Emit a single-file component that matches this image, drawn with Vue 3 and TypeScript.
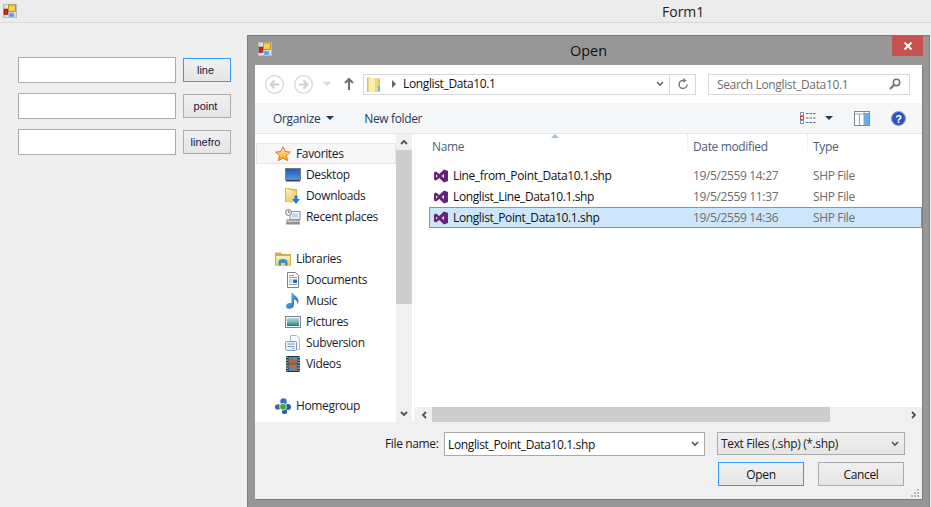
<script setup lang="ts">
interface NavItem { label: string; icon: string; head?: boolean; hot?: boolean }
const nav: (NavItem | null)[] = [
  { label: 'Favorites', icon: 'star', head: true, hot: true },
  { label: 'Desktop', icon: 'desktop' },
  { label: 'Downloads', icon: 'downloads' },
  { label: 'Recent places', icon: 'recent' },
  null,
  { label: 'Libraries', icon: 'libraries', head: true },
  { label: 'Documents', icon: 'documents' },
  { label: 'Music', icon: 'music' },
  { label: 'Pictures', icon: 'pictures' },
  { label: 'Subversion', icon: 'subversion' },
  { label: 'Videos', icon: 'videos' },
  null,
  { label: 'Homegroup', icon: 'homegroup', head: true },
]
const files = [
  { name: 'Line_from_Point_Data10.1.shp', date: '19/5/2559 14:27', selected: false },
  { name: 'Longlist_Line_Data10.1.shp', date: '19/5/2559 11:37', selected: false },
  { name: 'Longlist_Point_Data10.1.shp', date: '19/5/2559 14:36', selected: true },
]
const actions = [
  { label: 'line', focus: true },
  { label: 'point', focus: false },
  { label: 'linefro', focus: false },
]
</script>

<template>
  <div class="screen">
    <svg class="defs" width="0" height="0">
      <defs>
        <linearGradient id="g-star" x1="0" y1="0" x2="0" y2="1"><stop offset="0" stop-color="#fff0a0" /><stop offset="1" stop-color="#f9a11b" /></linearGradient>
        <linearGradient id="g-screen" x1="0" y1="0" x2="0" y2="1"><stop offset="0" stop-color="#2a53b0" /><stop offset="1" stop-color="#4a9be8" /></linearGradient>
        <linearGradient id="g-sky" x1="0" y1="0" x2="0" y2="1"><stop offset="0" stop-color="#b9dcf0" /><stop offset=".55" stop-color="#6fb0a0" /><stop offset="1" stop-color="#1f6f9c" /></linearGradient>
        <linearGradient id="g-folder" x1="0" y1="0" x2="0" y2="1"><stop offset="0" stop-color="#fdf3c4" /><stop offset="1" stop-color="#e8c860" /></linearGradient>
        <linearGradient id="g-note" x1="0" y1="0" x2="1" y2="1"><stop offset="0" stop-color="#66bdf0" /><stop offset="1" stop-color="#1667b8" /></linearGradient>
        <symbol id="app-glyph" viewBox="0 0 14 14">
          <rect x=".5" y=".5" width="13" height="13" fill="#d9d9d9" stroke="#bcbcbc" />
          <path d="M1 4.500h12M1 9.500h12M4.500 1v12M9.500 1v12" stroke="#f2f2f2" stroke-width=".8" />
          <rect x="1" y="5" width="4" height="5.500" fill="#c62a1c" stroke="#7c1a10" stroke-width=".6" />
          <rect x="5.500" y="1" width="7" height="6.500" fill="#fbd04a" stroke="#9e7c12" stroke-width=".7" />
          <rect x="6" y="9" width="5" height="4" fill="#5d9de8" stroke="#aac8ee" stroke-width=".6" />
        </symbol>
        <symbol id="vs" viewBox="0 0 14 14">
          <path fill="#68217a" d="M10 .5 14 2v10l-4 1.500L5.200 9 2 11.500 0 10.500v-7L2 2.500 5.200 5zM2 5.500v3L3.700 7zM10 5 7.600 7 10 9z" />
        </symbol>
        <symbol id="folder" viewBox="0 0 13 17">
          <path fill="#e3bd55" d="M0 1.500h4l1 1h8V16H0z" />
          <path fill="#fbeeb2" d="M1.500 1 8 3v14l-6.500-1.500z" />
          <path fill="#f2d47c" d="M8 3h3.500v13H8z" />
          <rect x="11" y="10" width="2" height="5" fill="#6cb2e8" />
        </symbol>
        <symbol id="star" viewBox="0 0 16 16">
          <path fill="url(#g-star)" stroke="#e8742a" stroke-width="1" stroke-linejoin="round" d="M8 .8l2.200 4.700 5.100.6-3.800 3.400 1.100 5.200L8 12.100l-4.600 2.600 1.100-5.200L.7 6.100l5.100-.6z" />
        </symbol>
        <symbol id="desktop" viewBox="0 0 16 16">
          <rect x=".5" y="1.500" width="15" height="11.500" fill="url(#g-screen)" stroke="#6f7d8c" />
          <rect x="1" y="13" width="14" height="1.500" fill="#3d4552" />
        </symbol>
        <symbol id="downloads" viewBox="0 0 16 16">
          <path fill="#d8b350" d="M0 0h5l1 1h6v13H0z" />
          <path fill="url(#g-folder)" d="M1 .5l6 2V15l-6-1.500z" />
          <path fill="#f0d688" d="M7 2.500h4V14H7z" />
          <path fill="#1c7ed6" d="M9.500 7.500h3v3.500H15l-4 5-4-5h2.500z" />
        </symbol>
        <symbol id="recent" viewBox="0 0 16 16">
          <rect x="5" y="2.500" width="10" height="8" fill="#f2f5f7" stroke="#8a949c" />
          <rect x="7" y="4.500" width="6" height="4" fill="#b8d8ec" />
          <circle cx="3.500" cy="3.500" r="3" fill="#eceeef" stroke="#7f7f7f" />
          <path d="M3.500 1.500v2h1.500" stroke="#555" fill="none" stroke-width=".7" />
          <rect x="2" y="11" width="12" height="2.500" fill="#cdd2d5" stroke="#8a9094" />
          <rect x="1" y="13.500" width="14" height="2" fill="#8e9498" />
        </symbol>
        <symbol id="libraries" viewBox="0 0 16 16">
          <path fill="#cfae50" d="M0 1.500h6l1 1.500h9v11.500H0z" />
          <path fill="url(#g-folder)" d="M1 5h14v9.500H1z" />
          <path fill="#3e8fc8" d="M3.500 14.500v-3.500a4.500 3 0 0 1 9 0v3.500h-2.500V12H6v2.500z" />
        </symbol>
        <symbol id="documents" viewBox="0 0 16 16">
          <path fill="#fdfdfd" stroke="#7c8288" d="M2.500.5h8l3 3v12h-11z" />
          <path d="M4 3.500h5M4 5.500h8M4 12.500h8" stroke="#8da2b8" />
          <rect x="8" y="7.500" width="4" height="3.500" fill="#2f6cb4" />
          <path d="M4 8h3M4 10h3" stroke="#8da2b8" />
        </symbol>
        <symbol id="music" viewBox="0 0 16 16">
          <path fill="url(#g-note)" d="M8 0c.6 2.500 5.500 3.500 5.500 8 0 1.500-.5 2.700-1.200 3.300.4-2.600-1.300-4.300-3.300-4.800V12c0 2.200-2.200 3.800-4.800 3.800C2.300 15.800 1 14.700 1 13.200c0-2.200 2.800-3.500 5.500-3V0z" />
        </symbol>
        <symbol id="pictures" viewBox="0 0 16 16">
          <rect x=".5" y="2.500" width="15" height="11" fill="#f2f4f5" stroke="#7f858a" />
          <rect x="2" y="4" width="12" height="8" fill="url(#g-sky)" />
        </symbol>
        <symbol id="subversion" viewBox="0 0 16 16">
          <path fill="#f7f9fb" stroke="#a9bccc" d="M5.500.5h6l3 3v11h-9z" />
          <rect x=".5" y="6.500" width="11" height="9" rx="1" fill="#eaf1f7" stroke="#7f9cb8" />
          <path d="M2.500 9h7M2.500 11.500h7M7.500 13.500h2" stroke="#7f9cb8" />
        </symbol>
        <symbol id="videos" viewBox="0 0 16 16">
          <rect x="1" y="0" width="14" height="16" fill="#1f3a3a" />
          <path d="M2 .8v14.400M14 .8v14.400" stroke="#dfe8e8" stroke-width="1.300" stroke-dasharray="1.300 1.400" />
          <rect x="3.500" y="1" width="9" height="6.500" fill="#4a8fc8" />
          <path d="M3.500 7.500V4l3-2 2 2.500 2-1 2 2v2z" fill="#b0633a" />
          <rect x="3.500" y="8.500" width="9" height="6.500" fill="#3d8fd6" />
          <path d="M3.500 8.500h9l-3 3 3 3.500h-4l-2-3-3-1z" fill="#b86a3e" />
        </symbol>
        <symbol id="homegroup" viewBox="0 0 16 16">
          <circle cx="2.800" cy="9" r="2.800" fill="#3f66b8" />
          <circle cx="8.500" cy="3.500" r="3.200" fill="#3a6fc0" />
          <circle cx="13" cy="9" r="3" fill="#2f5aa8" />
          <circle cx="9.500" cy="13.500" r="2.500" fill="#2c52a0" />
          <circle cx="8" cy="8.800" r="3.400" fill="#3fa83a" stroke="#c9e8c0" />
        </symbol>
      </defs>
    </svg>

    <header class="formbar">
      <svg class="app-icon"><use href="#app-glyph" /></svg>
      <span class="form-title">Form1</span>
    </header>

    <main class="form-body">
      <div v-for="a in actions" :key="a.label" class="form-row">
        <input class="form-input" type="text" />
        <button class="form-btn" :class="{ focus: a.focus }" type="button">{{ a.label }}</button>
      </div>
    </main>

    <section class="dialog">
      <div class="dlg-title">
        <svg class="dlg-icon"><use href="#app-glyph" /></svg>
        <span class="dlg-name">Open</span>
        <span class="dlg-close">
          <svg width="10" height="10" viewBox="0 0 10 10"><path d="M1.500 1.500l7 7M8.500 1.500l-7 7" stroke="#fff" stroke-width="2" /></svg>
        </span>
      </div>

      <div class="client">
        <div class="navrow">
          <svg class="round" width="19" height="19" viewBox="0 0 19 19"><circle cx="9.500" cy="9.500" r="8.800" fill="#fff" stroke="#d6d6d6" stroke-width="1.200" /><path d="M14 9.500H6M9.500 5.500l-4 4 4 4" fill="none" stroke="#cfcfcf" stroke-width="2" /></svg>
          <svg class="round fwd" width="19" height="19" viewBox="0 0 19 19"><circle cx="9.500" cy="9.500" r="8.800" fill="#fff" stroke="#d6d6d6" stroke-width="1.200" /><path d="M5 9.500h8M9.500 5.500l4 4-4 4" fill="none" stroke="#cfcfcf" stroke-width="2" /></svg>
          <span class="mini-down"></span>
          <svg class="up" width="10" height="14" viewBox="0 0 10 14"><path d="M5 13V2M1 6l4-4 4 4" fill="none" stroke="#6e6e6e" stroke-width="2" /></svg>
          <div class="address">
            <svg class="addr-folder"><use href="#folder" /></svg>
            <span class="crumb"></span>
            <span class="addr-text">Longlist_Data10.1</span>
            <svg class="chev addr-chev" width="8" height="6" viewBox="0 0 8 6"><path d="M1 1l3 3 3-3" fill="none" stroke="#666" stroke-width="1.600" /></svg>
            <span class="addr-refresh">
              <svg width="12" height="12" viewBox="0 0 12 12"><path d="M10 6.500A4 4 0 1 1 6 2.500h2" fill="none" stroke="#757575" stroke-width="1.500" /><path d="M6.500 0l3 2.500-3 2.500z" fill="#757575" /></svg>
            </span>
          </div>
          <div class="search">
            <span>Search Longlist_Data10.1</span>
            <svg width="12" height="12" viewBox="0 0 12 12"><circle cx="7.500" cy="4.500" r="3.200" fill="none" stroke="#707070" stroke-width="1.500" /><path d="M5 7l-4 4" stroke="#707070" stroke-width="2" /></svg>
          </div>
        </div>

        <div class="toolbar">
          <span class="tool organize">Organize<i class="caret"></i></span>
          <span class="tool">New folder</span>
          <span class="tool-right">
            <svg width="16" height="12" viewBox="0 0 16 12"><path d="M6 1.500h10M6 6h10M6 10.500h10" stroke="#5a6c80" stroke-dasharray="2.500 1" /><rect x=".5" y=".5" width="3" height="3" fill="#fff" stroke="#7f93a8" /><rect x=".5" y="4.500" width="3" height="3" fill="#fff" stroke="#c44" /><rect x=".5" y="8.500" width="3" height="3" fill="#fff" stroke="#7f93a8" /></svg>
            <i class="caret view-caret"></i>
            <svg class="pane" width="16" height="15" viewBox="0 0 16 15"><rect x=".5" y=".5" width="15" height="14" fill="#fff" stroke="#7d8a96" /><rect x="10" y="2" width="5" height="12" fill="#62aef0" /><path d="M.5 3h10M5.500 3v11M10 1v13" stroke="#9aa4ae" /></svg>
            <svg class="help" width="15" height="15" viewBox="0 0 15 15"><circle cx="7.500" cy="7.500" r="7" fill="#2b55c4" stroke="#9aa0aa" /><text x="7.500" y="11.500" text-anchor="middle" font-family="Liberation Sans" font-size="11" font-weight="700" fill="#fff">?</text></svg>
          </span>
        </div>

        <div class="panes">
          <aside class="sidebar">
            <ul class="tree">
              <template v-for="(n, i) in nav" :key="i">
                <li v-if="n" class="tree-row" :class="{ head: n.head, hot: n.hot }">
                  <svg class="tree-icon"><use :href="'#' + n.icon" /></svg>
                  <span>{{ n.label }}</span>
                </li>
                <li v-else class="tree-gap"></li>
              </template>
            </ul>
            <div class="vscroll">
              <span class="sb-btn"><svg width="8" height="6" viewBox="0 0 8 6"><path d="M1 5l3-3 3 3" fill="none" stroke="#505050" stroke-width="1.800" /></svg></span>
              <span class="vthumb"></span>
              <span class="sb-fill"></span>
              <span class="sb-btn"><svg width="8" height="6" viewBox="0 0 8 6"><path d="M1 1l3 3 3-3" fill="none" stroke="#505050" stroke-width="1.800" /></svg></span>
            </div>
          </aside>

          <div class="list">
            <div class="list-head">
              <span class="sort"></span>
              <span class="col-name">Name</span>
              <span class="col-date">Date modified</span>
              <span class="col-type">Type</span>
            </div>
            <div class="rows">
              <div v-for="f in files" :key="f.name" class="file" :class="{ selected: f.selected }">
                <svg class="vs"><use href="#vs" /></svg>
                <span class="file-name">{{ f.name }}</span>
                <span class="file-date">{{ f.date }}</span>
                <span class="file-type">SHP File</span>
              </div>
            </div>
            <div class="hscroll">
              <span class="hs-btn"><svg width="6" height="8" viewBox="0 0 6 8"><path d="M5 1L2 4l3 3" fill="none" stroke="#505050" stroke-width="1.800" /></svg></span>
              <span class="hthumb"></span>
              <span class="hs-btn end"><svg width="6" height="8" viewBox="0 0 6 8"><path d="M1 1l3 3-3 3" fill="none" stroke="#505050" stroke-width="1.800" /></svg></span>
            </div>
          </div>
        </div>

        <footer class="footer">
          <div class="foot-row">
            <span class="fn-label">File name:</span>
            <div class="combo">
              <span>Longlist_Point_Data10.1.shp</span>
              <svg width="8" height="6" viewBox="0 0 8 6"><path d="M1 1l3 3 3-3" fill="none" stroke="#555" stroke-width="1.600" /></svg>
            </div>
            <div class="filter">
              <span>Text Files (.shp) (*.shp)</span>
              <svg width="8" height="6" viewBox="0 0 8 6"><path d="M1 1l3 3 3-3" fill="none" stroke="#555" stroke-width="1.600" /></svg>
            </div>
          </div>
          <div class="foot-btns">
            <button class="dlg-btn primary" type="button">Open</button>
            <button class="dlg-btn" type="button">Cancel</button>
          </div>
          <svg class="grip" width="9" height="9" viewBox="0 0 9 9"><path d="M6 0h2v2H6zM3 3h2v2H3zM6 3h2v2H6zM0 6h2v2H0zM3 6h2v2H3zM6 6h2v2H6z" fill="#b8b8b8" /></svg>
        </footer>
      </div>
    </section>
  </div>
</template>

<style>
html, body { margin: 0; background: #efefef; overflow: hidden; }
</style>

<style scoped>
.screen {
  position: relative;
  width: 931px;
  height: 507px;
  overflow: hidden;
  background: #efefef;
  font-family: "Open Sans", "Noto Sans", sans-serif;
  font-size: 12px;
  letter-spacing: -0.36px;
  color: #1b1b2b;
}
.defs { position: absolute; }
svg { display: block; flex: none; }

.formbar {
  position: relative;
  height: 22px;
  background: #ececec;
  border-bottom: 1px solid #d8d8d8;
}
.app-icon { position: absolute; left: 3px; top: 4px; width: 14px; height: 14px; }
.form-title {
  position: absolute;
  left: 662px;
  top: 2px;
  font-size: 14px;
  letter-spacing: 0;
  color: #222;
}
.form-body {
  display: flex;
  flex-direction: column;
  gap: 10px;
  padding: 34px 0 0 18px;
}
.form-row { display: flex; align-items: center; gap: 7px; }
.form-input {
  box-sizing: border-box;
  width: 158px;
  height: 26px;
  margin: 0;
  border: 1px solid #ababb0;
  background: #fff;
  outline: none;
}
.form-btn {
  box-sizing: border-box;
  width: 48px;
  height: 24px;
  padding: 0 3px 0 0;
  border: 1px solid #acacac;
  background: linear-gradient(#f0f0f0, #e5e5e5);
  font-family: "Liberation Sans", sans-serif;
  font-size: 11px;
  letter-spacing: 0;
  color: #15153a;
}
.form-btn.focus { border-color: #3399ff; }

.dialog {
  position: absolute;
  left: 247px;
  top: 35px;
  box-sizing: border-box;
  width: 683px;
  height: 472px;
  display: flex;
  flex-direction: column;
  padding: 0 7px 8px;
  background: #979797;
  border: 1px solid #7c7c7c;
  border-bottom: none;
}
.dlg-title {
  position: relative;
  height: 29px;
  flex: none;
  display: flex;
  align-items: center;
  justify-content: center;
}
.dlg-icon { position: absolute; left: 3px; top: 6px; width: 14px; height: 14px; }
.dlg-name { font-size: 14.500px; letter-spacing: 0; color: #111; }
.dlg-close {
  position: absolute;
  right: -1px;
  top: 0;
  width: 31px;
  height: 20px;
  display: flex;
  align-items: center;
  justify-content: center;
  background: #c75050;
}

.client {
  flex: 1;
  display: flex;
  flex-direction: column;
  min-height: 0;
  background: #f0f0f0;
  box-shadow: 1px 1px 0 #7c7c7c;
}
.navrow {
  position: relative;
  height: 38px;
  flex: none;
  display: flex;
  align-items: center;
  padding-left: 10px;
  background: #fff;
}
.fwd { margin-left: 10px; }
.mini-down {
  width: 0;
  height: 0;
  margin-left: 10px;
  border: 4px solid transparent;
  border-top: 4px solid #d8d8d8;
  border-bottom: none;
}
.up { margin-left: 13px; }
.address {
  box-sizing: border-box;
  width: 333px;
  height: 21px;
  margin-left: 9px;
  display: flex;
  align-items: center;
  padding-left: 3px;
  border: 1px solid #d9d9d9;
}
.addr-folder { width: 13px; height: 17px; }
.crumb {
  width: 0;
  height: 0;
  margin-left: 12px;
  border: 4px solid transparent;
  border-left: 4px solid #666;
  border-right: none;
}
.addr-text { margin-left: 7px; flex: 1; color: #111; padding-bottom: 1px; }
.addr-chev { margin-right: 5px; }
.addr-refresh {
  width: 25px;
  height: 19px;
  display: flex;
  align-items: center;
  justify-content: center;
  border-left: 1px solid #d9d9d9;
}
.search {
  box-sizing: border-box;
  width: 202px;
  height: 21px;
  margin-left: 12px;
  display: flex;
  align-items: center;
  justify-content: space-between;
  padding: 0 8px;
  border: 1px solid #d9d9d9;
  color: #6d6d6d;
}
.toolbar {
  height: 31px;
  flex: none;
  box-sizing: border-box;
  display: flex;
  align-items: center;
  gap: 30px;
  padding: 0 0 0 18px;
  background: #f5f6f7;
  border-bottom: 1px solid #e4e6e8;
  color: #1e395b;
}
.tool { display: flex; align-items: center; }
.caret {
  width: 0;
  height: 0;
  margin-left: 6px;
  border: 4px solid transparent;
  border-top: 4px solid #1e395b;
  border-bottom: none;
}
.tool-right {
  margin-left: auto;
  display: flex;
  align-items: center;
  padding-right: 16px;
}
.view-caret { margin-left: 9px; }
.pane { margin-left: 21px; }
.help { margin-left: 21px; }

.panes { flex: 1; min-height: 0; display: flex; background: #fff; }
.sidebar { width: 157px; flex: none; display: flex; }
.tree { flex: 1; margin: 0; padding: 9px 0 0 1px; list-style: none; }
.tree-row {
  box-sizing: border-box;
  height: 21px;
  display: flex;
  align-items: center;
  gap: 5px;
  padding-left: 29px;
  color: #1b1b2b;
}
.tree-row.head { padding-left: 19px; }
.tree-row.hot {
  background: #f7f7f7;
  border: 1px solid #e6e6e6;
  padding-left: 18px;
}
.tree-gap { height: 21px; }
.tree-icon { width: 16px; height: 16px; }
.vscroll {
  width: 16px;
  flex: none;
  display: flex;
  flex-direction: column;
  background: #f0f0f0;
}
.sb-btn {
  height: 16px;
  flex: none;
  display: flex;
  align-items: center;
  justify-content: center;
}
.vthumb { height: 154px; flex: none; background: #cdcdcd; }
.sb-fill { flex: 1; }

.list {
  flex: 1;
  min-width: 0;
  display: flex;
  flex-direction: column;
  margin-left: 2px;
  border-left: 1px solid #f5f5f5;
}
.list-head {
  position: relative;
  height: 30px;
  flex: none;
  display: flex;
  color: #4c607a;
  padding: 4px 0 0 17px;
  box-sizing: border-box;
}
.sort {
  position: absolute;
  left: 136px;
  top: 0;
  width: 0;
  height: 0;
  border: 4px solid transparent;
  border-bottom: 4px solid #a8c4dc;
  border-top: none;
}
.col-name { width: 261px; }
.col-date { width: 120px; position: relative; }
.col-date::before,
.col-type::before {
  content: "";
  position: absolute;
  left: -6px;
  top: -4px;
  height: 22px;
  width: 1px;
  background: linear-gradient(#dfeaf5, #f8fbfd);
}
.col-type { position: relative; }
.rows { flex: 1; padding: 1px 0 0 14px; }
.file {
  box-sizing: border-box;
  height: 21px;
  display: flex;
  align-items: center;
  padding-left: 4px;
  border: 1px solid transparent;
}
.file.selected { background: #cde6fb; border-color: #5d9fdc; }
.vs { width: 14px; height: 14px; }
.file-name { width: 240px; margin-left: 5px; color: #111; letter-spacing: -0.38px; }
.file-date { width: 120px; color: #6d6d6d; }
.file-type { color: #6d6d6d; }
.hscroll { height: 15px; flex: none; display: flex; background: #f0f0f0; }
.hs-btn {
  width: 17px;
  flex: none;
  display: flex;
  align-items: center;
  justify-content: center;
}
.hs-btn.end { margin-left: auto; }
.hthumb { width: 398px; flex: none; background: #cdcdcd; }

.footer {
  position: relative;
  height: 77px;
  flex: none;
  box-sizing: border-box;
  padding-top: 10px;
  background: #f0f0f0;
}
.foot-row { display: flex; align-items: flex-start; padding-left: 130px; }
.fn-label { width: 59px; line-height: 24px; color: #1b1b2b; }
.combo {
  box-sizing: border-box;
  width: 261px;
  height: 24px;
  display: flex;
  align-items: center;
  justify-content: space-between;
  padding: 0 5px 0 3px;
  background: #fff;
  border: 1px solid #a9a9a9;
  color: #111;
}
.filter {
  box-sizing: border-box;
  width: 188px;
  height: 23px;
  margin-left: 12px;
  display: flex;
  align-items: center;
  justify-content: space-between;
  padding: 0 5px 0 3px;
  background: linear-gradient(#f0f0f0, #e5e5e5);
  border: 1px solid #acacac;
}
.foot-btns {
  display: flex;
  gap: 14px;
  margin-top: 6px;
  padding-left: 463px;
}
.dlg-btn {
  box-sizing: border-box;
  width: 86px;
  height: 24px;
  padding: 0;
  border: 1px solid #acacac;
  background: linear-gradient(#f0f0f0, #e5e5e5);
  font: inherit;
  letter-spacing: inherit;
  color: #111;
}
.dlg-btn.primary { border-color: #3399ff; }
.grip { position: absolute; right: 2px; bottom: 1px; }
</style>
